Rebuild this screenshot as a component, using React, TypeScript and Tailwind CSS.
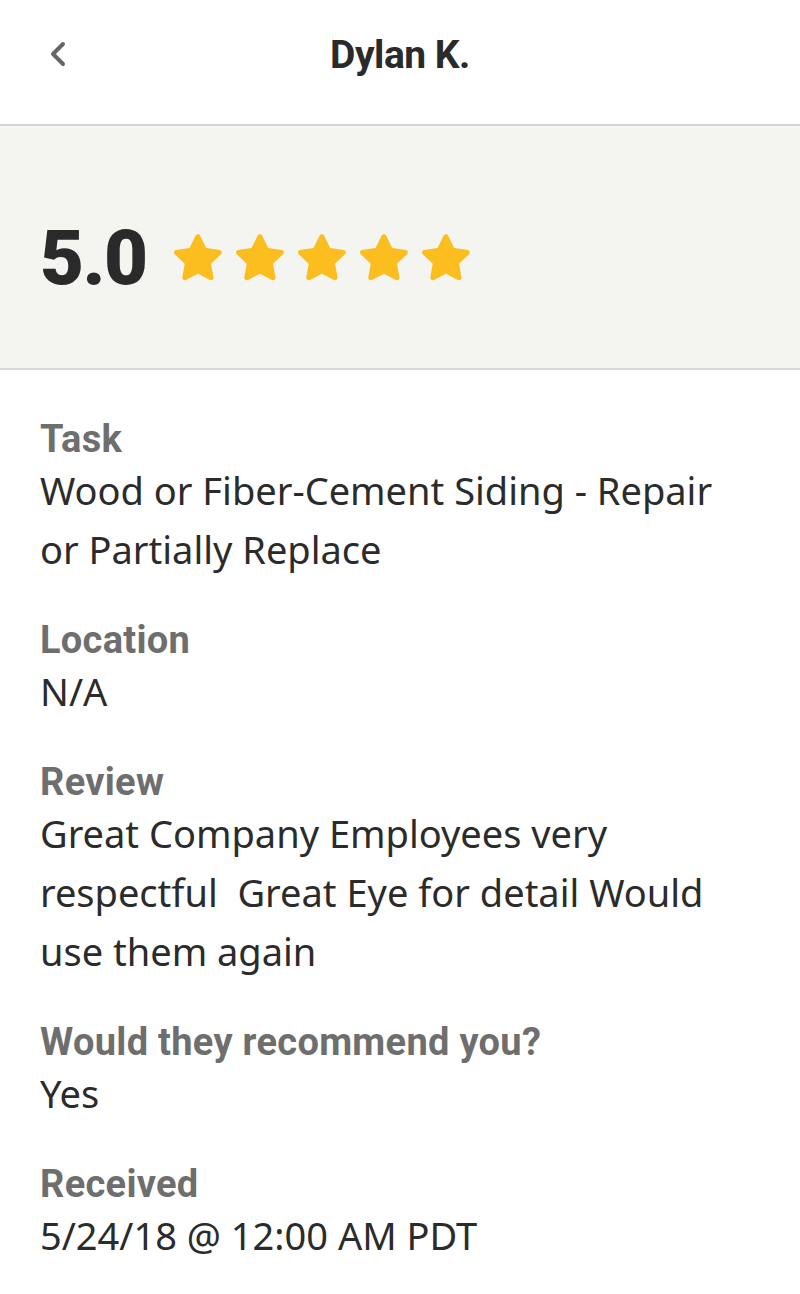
import { ChevronLeft } from "lucide-react";

const fields = [
  { label: "Task", value: "Wood or Fiber-Cement Siding - Repair or Partially Replace" },
  { label: "Location", value: "N/A" },
  {
    label: "Review",
    value: "Great Company Employees very respectful  Great Eye for detail Would use them again",
  },
  { label: "Would they recommend you?", value: "Yes" },
  { label: "Received", value: "5/24/18 @ 12:00 AM PDT" },
];

function Star() {
  return (
    <svg viewBox="0 0 24 24" className="h-[58px] w-[58px]" fill="#fcbd1f">
      <path
        d="M12 2.2c.4 0 .7.2.9.6l2.5 5.1 5.6.8c.4.1.7.3.8.7.1.4 0 .8-.3 1l-4.1 4 1 5.6c.1.4-.1.8-.4 1-.3.2-.7.3-1.1.1L12 18.5l-5 2.6c-.4.2-.8.1-1.1-.1-.3-.2-.5-.6-.4-1l1-5.6-4.1-4c-.3-.3-.4-.7-.3-1 .1-.4.4-.6.8-.7l5.6-.8 2.5-5.1c.3-.4.6-.6 1-.6z"
      />
    </svg>
  );
}

export default function App() {
  return (
    <div className="min-h-[1294px] w-[800px] bg-white font-['Roboto',sans-serif]">
      <header className="relative flex h-[126px] items-center justify-center border-b-2 border-[#d3d3d1] pb-[14px]">
        <button className="absolute left-[38px] top-[34px] text-[#666666]">
          <ChevronLeft className="h-10 w-10" strokeWidth={2.4} />
        </button>
        <h1 className="text-[39px] font-bold tracking-[-0.5px] text-[#2a2a2a]">Dylan K.</h1>
      </header>

      <section className="flex h-[244px] items-center gap-[22px] border-b-2 border-[#d8d8d4] bg-[#f4f4f1] px-[40px] pt-[22px]">
        <span className="text-[76px] font-black tracking-[-1.5px] text-[#2a2a2a]">5.0</span>
        <div className="flex gap-[4px]">
          {[0, 1, 2, 3, 4].map((i) => (
            <Star key={i} />
          ))}
        </div>
      </section>

      <div className="flex flex-col gap-[40px] pl-[40px] pr-[60px] pt-[48px]">
        {fields.map((field) => (
          <div key={field.label}>
            <p className="text-[38px] font-bold leading-[43px] tracking-[0.3px] text-[#6e6e6e]">
              {field.label}
            </p>
            <p className="whitespace-pre-wrap font-['Noto_Sans',sans-serif] text-[38px] leading-[59px] text-[#2b2b2b]">
              {field.value}
            </p>
          </div>
        ))}
      </div>
    </div>
  );
}
